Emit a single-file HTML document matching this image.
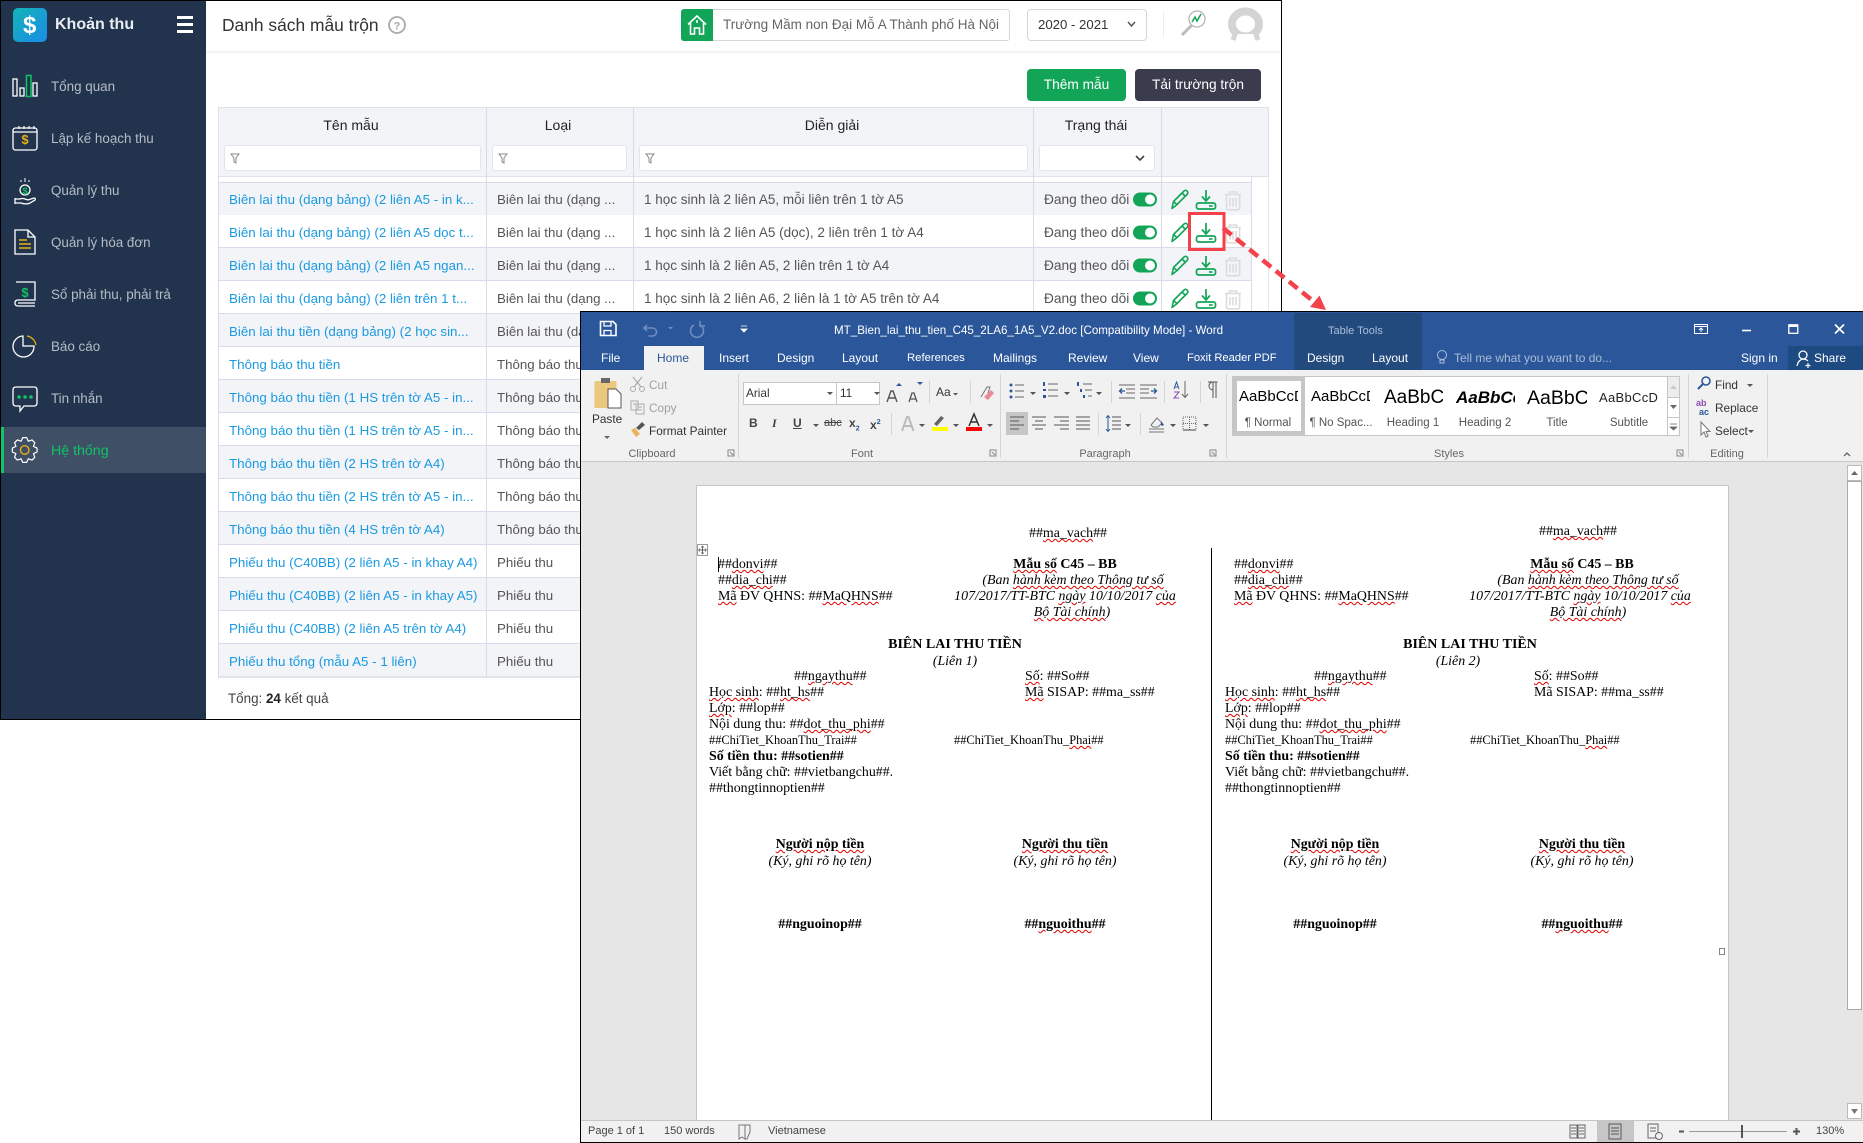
<!DOCTYPE html>
<html lang="vi"><head><meta charset="utf-8"><title>Danh sách mẫu trộn</title>
<style>
html,body{margin:0;padding:0;background:#fff}
#p{position:relative;width:1863px;height:1143px;overflow:hidden;background:#fff;font-family:"Liberation Sans",sans-serif}
.a{position:absolute;white-space:nowrap;line-height:16px;height:16px;margin-top:1px}
.c{transform:translateX(-50%)}
.b{position:absolute;box-sizing:border-box}
svg.l{position:absolute;left:0;top:0}
.m{font-size:13.4px;color:#b4bcc6;left:51px}
.h{font-size:14px;color:#222;font-weight:400}
.lk{font-size:13.35px;color:#1b9ae0;left:229px}
.t2{font-size:13.3px;color:#555;left:497px}
.t3{font-size:13.5px;color:#555;left:644px}
.t4{font-size:13.7px;color:#555;left:1044px}
.r{position:absolute;left:218px;width:1034px;height:33px;box-sizing:border-box;border-bottom:1px solid #d9dce8}
.g{background:#f3f4f8}
.w{background:#fff}
.f{position:absolute;top:145px;height:26px;background:#fff;border:1px solid #e3e5ec;border-radius:3px;box-sizing:border-box}
.tab{font-size:12px;color:#fff}
.rb{font-size:11.8px;color:#333}
.gl{font-size:11px;color:#666}
.sty{font-size:11.5px;color:#555}
.pv{margin-top:0}
.d{font-family:"Liberation Serif",serif;font-size:13.9px;color:#000;line-height:16px}
.dk{font-family:"Liberation Serif",serif;font-size:12.4px;color:#000;line-height:16px}
.bd{font-weight:bold}
.it{font-style:italic}
.s{text-decoration:underline wavy #e00000;text-decoration-thickness:.6px;text-underline-offset:1px}
.st{font-size:11px;color:#444}
</style></head><body><div id="p">

<!-- WEB APP -->
<div class="b" style="left:0;top:0;width:1282px;height:720px;border:1px solid #000;background:#fff"></div>
<div class="b" style="left:1px;top:1px;width:205px;height:718px;background:#22344d"></div>
<div class="b" style="left:1px;top:427px;width:205px;height:46px;background:#3f4f66"></div>
<div class="b" style="left:1px;top:427px;width:3px;height:46px;background:#10c565"></div>
<div class="b" style="left:206px;top:1px;width:1075px;height:50px;background:#fff;box-shadow:0 1px 3px rgba(0,0,0,.1)"></div>
<div class="b" style="left:13px;top:8px;width:34px;height:34px;border-radius:5px;background:linear-gradient(135deg,#12b5b5,#1b8be8)"></div>
<div class="a" style="left:23px;top:12px;font-size:24px;line-height:25px;height:25px;font-weight:bold;color:#fff">$</div>
<div class="a" style="left:55px;top:16px;font-size:16px;font-weight:bold;color:#e9edf2">Khoản thu</div>
<div class="b" style="left:177px;top:16px;width:16px;height:2.5px;background:#fff"></div>
<div class="b" style="left:177px;top:23px;width:16px;height:2.5px;background:#fff"></div>
<div class="b" style="left:177px;top:30px;width:16px;height:2.5px;background:#fff"></div>

<div class="a m" style="top:78px">Tổng quan</div>
<div class="a m" style="top:130px">Lập kế hoạch thu</div>
<div class="a m" style="top:182px">Quản lý thu</div>
<div class="a m" style="top:234px">Quản lý hóa đơn</div>
<div class="a m" style="top:286px">Sổ phải thu, phải trả</div>
<div class="a m" style="top:338px">Báo cáo</div>
<div class="a m" style="top:390px">Tin nhắn</div>
<div class="a m" style="top:442px;color:#10c565;font-size:14.2px">Hệ thống</div>

<div class="a" style="left:222px;top:16px;font-size:17.4px;color:#333">Danh sách mẫu trộn</div>

<div class="b" style="left:681px;top:9px;width:329px;height:32px;border:1px solid #d4d6da;border-radius:3px"></div>
<div class="b" style="left:681px;top:9px;width:32px;height:32px;background:#12a558;border-radius:3px 0 0 3px"></div>
<div class="a" style="left:723px;top:16px;font-size:13.5px;color:#666">Trường Mầm non Đại Mỗ A Thành phố Hà Nội</div>
<div class="b" style="left:1027px;top:9px;width:120px;height:32px;border:1px solid #d4d6da;border-radius:4px"></div>
<div class="a" style="left:1038px;top:16px;font-size:13.2px;color:#333">2020 - 2021</div>
<div class="b" style="left:1163px;top:12px;width:1px;height:26px;background:#eee"></div>

<div class="b" style="left:1027px;top:69px;width:99px;height:32px;background:#12a558;border-radius:4px"></div>
<div class="a c" style="left:1076.5px;top:76px;font-size:13.7px;color:#fff">Thêm mẫu</div>
<div class="b" style="left:1135px;top:69px;width:126px;height:32px;background:#3a3c4e;border-radius:4px"></div>
<div class="a c" style="left:1198px;top:76px;font-size:13.7px;color:#fff">Tải trường trộn</div>

<!-- table header -->
<div class="b" style="left:218px;top:107px;width:1051px;height:70px;background:#f3f4f8;border:1px solid #dfe1e8"></div>
<div class="a c h" style="left:351px;top:116px">Tên mẫu</div>
<div class="a c h" style="left:558px;top:116px">Loại</div>
<div class="a c h" style="left:832px;top:116px">Diễn giải</div>
<div class="a c h" style="left:1096px;top:116px">Trạng thái</div>
<div class="f" style="left:224px;width:257px"></div>
<div class="f" style="left:492px;width:135px"></div>
<div class="f" style="left:639px;width:389px"></div>
<div class="f" style="left:1039px;width:116px"></div>

<!-- rows -->
<div class="r g" style="top:182px;border-top:1px solid #d9dce8;height:34px"></div>
<div class="r w" style="top:215px"></div>
<div class="r g" style="top:248px"></div>
<div class="r w" style="top:281px"></div>
<div class="r g" style="top:314px"></div>
<div class="r w" style="top:347px"></div>
<div class="r g" style="top:380px"></div>
<div class="r w" style="top:413px"></div>
<div class="r g" style="top:446px"></div>
<div class="r w" style="top:479px"></div>
<div class="r g" style="top:512px"></div>
<div class="r w" style="top:545px"></div>
<div class="r g" style="top:578px"></div>
<div class="r w" style="top:611px"></div>
<div class="r g" style="top:644px;border-bottom:2px solid #e2e4ea;height:34px"></div>
<div class="b" style="left:218px;top:176px;width:1px;height:502px;background:#d9dce8"></div>
<div class="b" style="left:486px;top:107px;width:1px;height:571px;background:#d9dce8"></div>
<div class="b" style="left:633px;top:107px;width:1px;height:571px;background:#d9dce8"></div>
<div class="b" style="left:1033px;top:107px;width:1px;height:571px;background:#d9dce8"></div>
<div class="b" style="left:1161px;top:107px;width:1px;height:571px;background:#d9dce8"></div>
<div class="b" style="left:1251px;top:176px;width:1px;height:502px;background:#d9dce8"></div>
<div class="b" style="left:1268px;top:176px;width:1px;height:502px;background:#e4e6ec"></div>

<div class="a lk" style="top:191px">Biên lai thu (dạng bảng) (2 liên A5 - in k...</div>
<div class="a lk" style="top:224px">Biên lai thu (dạng bảng) (2 liên A5 dọc t...</div>
<div class="a lk" style="top:257px">Biên lai thu (dạng bảng) (2 liên A5 ngan...</div>
<div class="a lk" style="top:290px">Biên lai thu (dạng bảng) (2 liên trên 1 t...</div>
<div class="a lk" style="top:323px">Biên lai thu tiền (dạng bảng) (2 học sin...</div>
<div class="a lk" style="top:356px">Thông báo thu tiền</div>
<div class="a lk" style="top:389px">Thông báo thu tiền (1 HS trên tờ A5 - in...</div>
<div class="a lk" style="top:422px">Thông báo thu tiền (1 HS trên tờ A5 - in...</div>
<div class="a lk" style="top:455px">Thông báo thu tiền (2 HS trên tờ A4)</div>
<div class="a lk" style="top:488px">Thông báo thu tiền (2 HS trên tờ A5 - in...</div>
<div class="a lk" style="top:521px">Thông báo thu tiền (4 HS trên tờ A4)</div>
<div class="a lk" style="top:554px">Phiếu thu (C40BB) (2 liên A5 - in khay A4)</div>
<div class="a lk" style="top:587px">Phiếu thu (C40BB) (2 liên A5 - in khay A5)</div>
<div class="a lk" style="top:620px">Phiếu thu (C40BB) (2 liên A5 trên tờ A4)</div>
<div class="a lk" style="top:653px">Phiếu thu tổng (mẫu A5 - 1 liên)</div>

<div class="a t2" style="top:191px">Biên lai thu (dạng ...</div>
<div class="a t2" style="top:224px">Biên lai thu (dạng ...</div>
<div class="a t2" style="top:257px">Biên lai thu (dạng ...</div>
<div class="a t2" style="top:290px">Biên lai thu (dạng ...</div>
<div class="a t2" style="top:323px">Biên lai thu (dạng ...</div>
<div class="a t2" style="top:356px">Thông báo thu tiền</div>
<div class="a t2" style="top:389px">Thông báo thu tiền</div>
<div class="a t2" style="top:422px">Thông báo thu tiền</div>
<div class="a t2" style="top:455px">Thông báo thu tiền</div>
<div class="a t2" style="top:488px">Thông báo thu tiền</div>
<div class="a t2" style="top:521px">Thông báo thu tiền</div>
<div class="a t2" style="top:554px">Phiếu thu</div>
<div class="a t2" style="top:587px">Phiếu thu</div>
<div class="a t2" style="top:620px">Phiếu thu</div>
<div class="a t2" style="top:653px">Phiếu thu</div>

<div class="a t3" style="top:191px">1 học sinh là 2 liên A5, mỗi liên trên 1 tờ A5</div>
<div class="a t3" style="top:224px">1 học sinh là 2 liên A5 (dọc), 2 liên trên 1 tờ A4</div>
<div class="a t3" style="top:257px">1 học sinh là 2 liên A5, 2 liên trên 1 tờ A4</div>
<div class="a t3" style="top:290px">1 học sinh là 2 liên A6, 2 liên là 1 tờ A5 trên tờ A4</div>
<div class="a t4" style="top:191px">Đang theo dõi</div>
<div class="a t4" style="top:224px">Đang theo dõi</div>
<div class="a t4" style="top:257px">Đang theo dõi</div>
<div class="a t4" style="top:290px">Đang theo dõi</div>

<div class="a" style="left:228px;top:690px;font-size:13.4px;color:#444">Tổng: <b style="color:#222">24</b> kết quả</div>

<svg class="l" width="1863" height="1143" viewBox="0 0 1863 1143" fill="none">
<defs>
<g id="pen" fill="none" stroke="#12a558" stroke-width="1.6" stroke-linejoin="round"><path d="M1172 208.500l1.500-7 10.500-10.500q2-1.500 3.300.2 1.200 1.800-.3 3.300l-10.500 10.500z"/><path d="M1173.500 201.500l4 3.500M1182 193l3.500 3.500"/></g>
<g id="dl" fill="none" stroke="#12a558" stroke-width="1.700"><path d="M1206 190v10M1202 196.500l4 4.500 4-4.500"/><rect x="1196.500" y="203" width="19" height="6" rx="2"/><path d="M1209 206h3.500"/></g>
<g id="tr" fill="none" stroke="#dcdcdc" stroke-width="1.600"><path d="M1225 194.500h16M1229.500 194.500v-2.500h7v2.500"/><path d="M1226.500 194.500v13.500q0 1.800 1.800 1.800h9.500q1.800 0 1.800-1.800v-13.500"/><path d="M1230 198v8.500M1233 198v8.500M1236 198v8.500"/></g>
<g id="tg"><rect x="1133" y="192.500" width="24" height="14" rx="7" fill="#12a558"/><circle cx="1150" cy="199.500" r="5" fill="#fff"/></g>
<path id="fl" d="M0 0h8l-3 4v5l-2-1V4z" stroke="#888" stroke-width="1"/>
</defs>
<use href="#pen"/><use href="#dl"/><use href="#tr"/><use href="#tg"/>
<use href="#pen" y="33"/><use href="#dl" y="33"/><use href="#tr" y="33"/><use href="#tg" y="33"/>
<use href="#pen" y="66"/><use href="#dl" y="66"/><use href="#tr" y="66"/><use href="#tg" y="66"/>
<use href="#pen" y="99"/><use href="#dl" y="99"/><use href="#tr" y="99"/><use href="#tg" y="99"/>
<use href="#fl" x="231" y="154"/><use href="#fl" x="499" y="154"/><use href="#fl" x="646" y="154"/>
<path d="M1136 156l4 4 4-4" stroke="#444" stroke-width="1.600"/>
<path d="M1128 22l3.500 4 3.500-4" stroke="#555" stroke-width="1.500"/>
<!-- help -->
<circle cx="397" cy="25" r="8" stroke="#aaa" stroke-width="1.800"/>
<text x="397" y="29.500" font-family="Liberation Sans" font-size="11" font-weight="bold" fill="#aaa" text-anchor="middle">?</text>
<!-- home -->
<path d="M688 24.500l9-8.500 9 8.500M690.500 23v11h4v-6h5v6h4V23M697 20v3" stroke="#fff" stroke-width="1.600"/>
<!-- magnifier -->
<circle cx="1197" cy="19" r="8" stroke="#b5b5b5" stroke-width="1.300"/>
<path d="M1192 25l-10 10" stroke="#bbb" stroke-width="3"/>
<path d="M1192 22l3-5 2 4 4-7" stroke="#12a558" stroke-width="1.500"/>
<!-- avatar -->
<ellipse cx="1245.500" cy="24" rx="13.500" ry="12.500" stroke="#d4d4d4" stroke-width="8"/>
<path d="M1230 41q4-6 8-7h15q4 1 8 7" fill="#fff"/>
<path d="M1236 32l-3 8M1255 32l3 8" stroke="#d4d4d4" stroke-width="5"/>
<!-- sidebar icons -->
<g stroke="#fff" stroke-width="1.300">
<rect x="13" y="79" width="4" height="17"/><rect x="20" y="88" width="4" height="8"/><rect x="26.500" y="75.500" width="4.500" height="21" stroke="#10c565" stroke-width="1.500"/><rect x="33" y="83" width="4" height="13"/>
<rect x="13" y="128" width="24" height="22" rx="2.500"/><path d="M13 132h24"/><path d="M19 126v3M24 126v3M29 126v3M34 126v3" stroke-width="1.200"/>
<path d="M15 199h5q2-1 5 0l3 1 6-2q2 0 1 2l-6 3.500q-4 1-8-.5h-6zM15 198v6"/><circle cx="25" cy="190" r="5"/><path d="M25 178v4M21 180v2M29 180v2" stroke-width="1"/>
<path d="M15 230h13l7 7v17H15zM28 230v7h7"/>
<path d="M16 282h19v18H18q-3 0-3 3t3 3h17M18 303h17"/>
<path d="M34 346a10.500 10.500 0 1 1-11-10v10z"/>
<path d="M16 387h18q3 0 3 3v13q0 3-3 3H24l-4 5v-5h-4q-3 0-3-3v-13q0-3 3-3z"/>
<path transform="translate(24.700 450)" stroke-width="1.200" stroke-linejoin="round" d="M-1.960-12.350L1.960-12.350L3.640-8.780L7.350-10.110L10.110-7.350L8.780-3.640L12.350-1.960L12.350 1.960L8.780 3.640L10.110 7.350L7.350 10.110L3.640 8.780L1.960 12.350L-1.960 12.350L-3.640 8.780L-7.350 10.110L-10.110 7.350L-8.780 3.640L-12.350 1.960L-12.350-1.960L-8.780-3.640L-10.110-7.350L-7.350-10.110L-3.640-8.780Z"/>
</g>
<path d="M27 336a11 11 0 0 1 9 9" stroke="#e5b016" stroke-width="1.300"/>
<path d="M19 240h8M19 244h12M19 248h12" stroke="#e5b016" stroke-width="1.500"/>
<circle cx="24.700" cy="450" r="4.300" stroke="#e5b016" stroke-width="1.400"/>
<g fill="#10c565"><circle cx="19" cy="397" r="1.800"/><circle cx="25" cy="397" r="1.800"/><circle cx="31" cy="397" r="1.800"/></g>
<text x="25" y="144" font-family="Liberation Sans" font-size="13" font-weight="bold" fill="#e5b016" text-anchor="middle">$</text>
<text x="25" y="194" font-family="Liberation Sans" font-size="9.500" font-weight="bold" fill="#10c565" text-anchor="middle">$</text>
<text x="25" y="297" font-family="Liberation Sans" font-size="13" font-weight="bold" fill="#10c565" text-anchor="middle">$</text>
<!-- red box + arrow -->
<rect x="1189.500" y="213.500" width="34.500" height="36" stroke="#f4424a" stroke-width="3"/>
<path d="M1223 228L1313 301" stroke="#f4424a" stroke-width="4.500" stroke-dasharray="11 6"/>
<path d="M1310 307l9.500-11.500 6.500 14.500z" fill="#f4424a"/>
</svg>

<!-- WORD WINDOW -->
<div class="b" style="left:580px;top:311px;width:1283px;height:832px;background:#e6e6e6;border-left:1px solid #000;border-top:1px solid #000;border-bottom:1px solid #000"></div>
<div class="b" style="left:581px;top:312px;width:1282px;height:58px;background:#2b579a"></div>
<div class="b" style="left:1294px;top:313px;width:128px;height:57px;background:#234a7d"></div>
<div class="b" style="left:644px;top:346px;width:60px;height:24px;background:#f1f1f1"></div>
<div class="b" style="left:1788px;top:346px;width:75px;height:24px;background:#1d4a80"></div>
<div class="b" style="left:581px;top:370px;width:1282px;height:92px;background:#f1f1f1;border-bottom:1px solid #c6c6c6"></div>

<div class="a" style="left:834px;top:322px;font-size:11.6px;color:#fff">MT_Bien_lai_thu_tien_C45_2LA6_1A5_V2.doc [Compatibility Mode] - Word</div>
<div class="a tab" style="left:601px;top:349px">File</div>
<div class="a tab" style="left:657px;top:349px;color:#2b579a">Home</div>
<div class="a tab" style="left:719px;top:349px">Insert</div>
<div class="a tab" style="left:777px;top:349px">Design</div>
<div class="a tab" style="left:842px;top:349px">Layout</div>
<div class="a tab" style="left:907px;top:349px;font-size:11.3px">References</div>
<div class="a tab" style="left:993px;top:349px">Mailings</div>
<div class="a tab" style="left:1068px;top:349px">Review</div>
<div class="a tab" style="left:1133px;top:349px">View</div>
<div class="a tab" style="left:1187px;top:349px;font-size:11.2px">Foxit Reader PDF</div>
<div class="a tab" style="left:1328px;top:322px;font-size:11px;color:#a9bcd8">Table Tools</div>
<div class="a tab" style="left:1307px;top:349px">Design</div>
<div class="a tab" style="left:1372px;top:349px">Layout</div>
<div class="a tab" style="left:1454px;top:349px;color:#a9bbd6">Tell me what you want to do...</div>
<div class="a tab" style="left:1741px;top:349px">Sign in</div>
<div class="a tab" style="left:1814px;top:349px">Share</div>

<div class="a rb" style="left:592px;top:410px">Paste</div>
<div class="a rb" style="left:649px;top:376px;color:#a0a0a0">Cut</div>
<div class="a rb" style="left:649px;top:399px;color:#a0a0a0">Copy</div>
<div class="a rb" style="left:649px;top:422px">Format Painter</div>
<div class="a c gl" style="left:652px;top:445px">Clipboard</div>
<div class="a c gl" style="left:862px;top:445px">Font</div>
<div class="a c gl" style="left:1105px;top:445px">Paragraph</div>
<div class="a c gl" style="left:1449px;top:445px">Styles</div>
<div class="a c gl" style="left:1727px;top:445px">Editing</div>

<div class="b" style="left:743px;top:382px;width:94px;height:23px;background:#fff;border:1px solid #c6c6c6"></div>
<div class="b" style="left:836px;top:382px;width:44px;height:23px;background:#fff;border:1px solid #c6c6c6"></div>
<div class="a rb" style="left:746px;top:384px">Arial</div>
<div class="a rb" style="left:840px;top:384px">11</div>
<div class="a rb" style="left:936px;top:383px;font-size:12px">Aa</div>
<div class="a" style="left:749px;top:414px;font-size:12px;font-weight:bold;color:#444">B</div>
<div class="a" style="left:772px;top:414px;font-size:12px;font-style:italic;font-family:'Liberation Serif',serif;font-weight:bold;color:#444">I</div>
<div class="a" style="left:793px;top:414px;font-size:12px;font-weight:bold;color:#444;text-decoration:underline">U</div>
<div class="a" style="left:824px;top:414px;font-size:11px;color:#444;text-decoration:line-through">abc</div>
<div class="a" style="left:849px;top:414px;font-size:12px;font-weight:bold;color:#444">x<sub style="font-size:7px;color:#2b579a">2</sub></div>
<div class="a" style="left:870px;top:414px;font-size:12px;font-weight:bold;color:#444">x<sup style="font-size:7px;color:#2b579a">2</sup></div>

<div class="b" style="left:1006px;top:412px;width:22px;height:23px;background:#c6c6c6"></div>

<!-- styles gallery -->
<div class="b" style="left:1232px;top:376px;width:448px;height:60px;background:#fff;border:1px solid #c6c6c6"></div>
<div class="b" style="left:1233px;top:377px;width:72px;height:58px;border:4px solid #c6c6c6"></div>
<div class="a pv" style="left:1239px;top:389px;width:59px;overflow:hidden;font-size:15px;color:#000">AaBbCcD</div>
<div class="a pv" style="left:1311px;top:389px;width:59px;overflow:hidden;font-size:15px;color:#000">AaBbCcD</div>
<div class="a pv" style="left:1384px;top:388px;width:59px;overflow:hidden;font-size:19px;line-height:20px;height:21px;color:#000">AaBbC</div>
<div class="a pv" style="left:1456px;top:388px;width:59px;overflow:hidden;font-size:17px;line-height:20px;height:21px;color:#000;font-weight:bold;font-style:italic">AaBbCc</div>
<div class="a pv" style="left:1527px;top:388px;width:60px;overflow:hidden;font-size:19.5px;line-height:20px;height:21px;color:#000">AaBbC</div>
<div class="a pv" style="left:1599px;top:390px;width:59px;overflow:hidden;font-size:13px;color:#222;letter-spacing:.3px">AaBbCcD</div>
<div class="a c sty" style="left:1268px;top:414px">¶ Normal</div>
<div class="a c sty" style="left:1341px;top:414px">¶ No Spac...</div>
<div class="a c sty" style="left:1413px;top:414px">Heading 1</div>
<div class="a c sty" style="left:1485px;top:414px">Heading 2</div>
<div class="a c sty" style="left:1557px;top:414px">Title</div>
<div class="a c sty" style="left:1629px;top:414px">Subtitle</div>
<div class="b" style="left:1667px;top:376px;width:13px;height:60px;background:#fff;border:1px solid #c6c6c6"></div>
<div class="b" style="left:1667px;top:376px;width:13px;height:22px;background:#ededed;border:1px solid #c6c6c6"></div>
<div class="b" style="left:1667px;top:417px;width:13px;height:1px;background:#c6c6c6"></div>

<div class="a rb" style="left:1715px;top:376px">Find</div>
<div class="a rb" style="left:1715px;top:399px">Replace</div>
<div class="a rb" style="left:1715px;top:422px">Select</div>

<!-- page -->
<div class="b" style="left:696px;top:485px;width:1033px;height:635px;background:#fff;border:1px solid #c6c6c6;border-bottom:0"></div>
<div class="b" style="left:1211px;top:548px;width:1px;height:572px;background:#000"></div>
<div class="b" style="left:718px;top:557px;width:1px;height:15px;background:#000"></div>
<div class="b" style="left:697px;top:544px;width:11px;height:12px;background:#fff;border:1px solid #999"></div>
<div class="b" style="left:1719px;top:948px;width:6px;height:7px;background:#fff;border:1px solid #888"></div>

<!-- doc left -->
<div class="a c d" style="left:1068px;top:525px">##<span class="s">ma_vach</span>##</div>
<div class="a d" style="left:718px;top:556px">##<span class="s">donvi</span>##</div>
<div class="a d" style="left:718px;top:572px">##<span class="s">dia_chi</span>##</div>
<div class="a d" style="left:718px;top:588px"><span class="s">Mã</span> ĐV QHNS: ##<span class="s">MaQHNS</span>##</div>
<div class="a c d bd" style="left:1065px;top:556px"><span class="s">Mẫu số</span> C45 – BB</div>
<div class="a c d it" style="left:1073px;top:572px">(Ban <span class="s">hành kèm theo Thông tư số</span></div>
<div class="a c d it" style="left:1065px;top:588px">107/2017/TT-BTC <span class="s">ngày</span> 10/10/2017 <span class="s">của</span></div>
<div class="a c d it" style="left:1072px;top:604px"><span class="s">Bộ Tài chính</span>)</div>
<div class="a c d bd" style="left:955px;top:636px;font-size:14px">BIÊN LAI THU TIỀN</div>
<div class="a c d it" style="left:955px;top:653px">(Liên 1)</div>
<div class="a d" style="left:794px;top:668px">##<span class="s">ngaythu</span>##</div>
<div class="a d" style="left:1025px;top:668px"><span class="s">Số</span>: ##So##</div>
<div class="a d" style="left:709px;top:684px"><span class="s">Học sinh</span>: ##<span class="s">ht_hs</span>##</div>
<div class="a d" style="left:1025px;top:684px"><span class="s">Mã</span> SISAP: ##ma_ss##</div>
<div class="a d" style="left:709px;top:700px"><span class="s">Lớp</span>: ##lop##</div>
<div class="a d" style="left:709px;top:716px">Nội dung thu: ##<span class="s">dot_thu_phi</span>##</div>
<div class="a dk" style="left:709px;top:731px">##ChiTiet_KhoanThu_Trai##</div>
<div class="a dk" style="left:954px;top:731px">##ChiTiet_KhoanThu_<span class="s">Phai</span>##</div>
<div class="a d bd" style="left:709px;top:748px">Số tiền thu: ##sotien##</div>
<div class="a d" style="left:709px;top:764px">Viết bằng chữ: ##vietbangchu##.</div>
<div class="a d" style="left:709px;top:780px">##thongtinnoptien##</div>
<div class="a c d bd" style="left:820px;top:836px"><span class="s">Người nộp tiền</span></div>
<div class="a c d bd" style="left:1065px;top:836px"><span class="s">Người thu tiền</span></div>
<div class="a c d it" style="left:820px;top:853px">(Ký, ghi rõ họ tên)</div>
<div class="a c d it" style="left:1065px;top:853px">(Ký, ghi rõ họ tên)</div>
<div class="a c d bd" style="left:820px;top:916px">##nguoinop##</div>
<div class="a c d bd" style="left:1065px;top:916px">##<span class="s">nguoithu</span>##</div>

<!-- doc right -->
<div class="a c d" style="left:1578px;top:523px">##<span class="s">ma_vach</span>##</div>
<div class="a d" style="left:1234px;top:556px">##<span class="s">donvi</span>##</div>
<div class="a d" style="left:1234px;top:572px">##<span class="s">dia_chi</span>##</div>
<div class="a d" style="left:1234px;top:588px"><span class="s">Mã</span> ĐV QHNS: ##<span class="s">MaQHNS</span>##</div>
<div class="a c d bd" style="left:1582px;top:556px"><span class="s">Mẫu số</span> C45 – BB</div>
<div class="a c d it" style="left:1588px;top:572px">(Ban <span class="s">hành kèm theo Thông tư số</span></div>
<div class="a c d it" style="left:1580px;top:588px">107/2017/TT-BTC <span class="s">ngày</span> 10/10/2017 <span class="s">của</span></div>
<div class="a c d it" style="left:1588px;top:604px"><span class="s">Bộ Tài chính</span>)</div>
<div class="a c d bd" style="left:1470px;top:636px;font-size:14px">BIÊN LAI THU TIỀN</div>
<div class="a c d it" style="left:1458px;top:653px">(Liên 2)</div>
<div class="a d" style="left:1314px;top:668px">##<span class="s">ngaythu</span>##</div>
<div class="a d" style="left:1534px;top:668px"><span class="s">Số</span>: ##So##</div>
<div class="a d" style="left:1225px;top:684px"><span class="s">Học sinh</span>: ##<span class="s">ht_hs</span>##</div>
<div class="a d" style="left:1534px;top:684px">Mã SISAP: ##ma_ss##</div>
<div class="a d" style="left:1225px;top:700px"><span class="s">Lớp</span>: ##lop##</div>
<div class="a d" style="left:1225px;top:716px">Nội dung thu: ##<span class="s">dot_thu_phi</span>##</div>
<div class="a dk" style="left:1225px;top:731px">##ChiTiet_KhoanThu_Trai##</div>
<div class="a dk" style="left:1470px;top:731px">##ChiTiet_KhoanThu_<span class="s">Phai</span>##</div>
<div class="a d bd" style="left:1225px;top:748px">Số tiền thu: ##sotien##</div>
<div class="a d" style="left:1225px;top:764px">Viết bằng chữ: ##vietbangchu##.</div>
<div class="a d" style="left:1225px;top:780px">##thongtinnoptien##</div>
<div class="a c d bd" style="left:1335px;top:836px"><span class="s">Người nộp tiền</span></div>
<div class="a c d bd" style="left:1582px;top:836px"><span class="s">Người thu tiền</span></div>
<div class="a c d it" style="left:1335px;top:853px">(Ký, ghi rõ họ tên)</div>
<div class="a c d it" style="left:1582px;top:853px">(Ký, ghi rõ họ tên)</div>
<div class="a c d bd" style="left:1335px;top:916px">##nguoinop##</div>
<div class="a c d bd" style="left:1582px;top:916px">##<span class="s">nguoithu</span>##</div>

<!-- scrollbar -->
<div class="b" style="left:1846px;top:463px;width:17px;height:657px;background:#e6e6e6"></div>
<div class="b" style="left:1847px;top:465px;width:15px;height:16px;background:#fff;border:1px solid #bbb"></div>
<div class="b" style="left:1847px;top:481px;width:15px;height:529px;background:#fff;border:1px solid #aaa"></div>
<div class="b" style="left:1847px;top:1103px;width:15px;height:16px;background:#fff;border:1px solid #bbb"></div>

<!-- status bar -->
<div class="b" style="left:581px;top:1120px;width:1282px;height:22px;background:#f1f1f1;border-top:1px solid #c6c6c6"></div>
<div class="b" style="left:1597px;top:1120px;width:37px;height:22px;background:#c6c6c6"></div>
<div class="a st" style="left:588px;top:1122px">Page 1 of 1</div>
<div class="a st" style="left:664px;top:1122px">150 words</div>
<div class="a st" style="left:768px;top:1122px">Vietnamese</div>
<div class="a st" style="left:1816px;top:1122px">130%</div>

<svg class="l" width="1863" height="1143" viewBox="0 0 1863 1143" fill="none" style="z-index:3">
<!-- QAT -->
<path d="M600.500 321.500h12.500l3 3v11h-15.500z" stroke="#fff" stroke-width="1.600"/><path d="M604 322v4h7v-4M604 335v-4.500h7v4.500" stroke="#fff" stroke-width="1.300"/>
<path d="M647 325l-3 3 3 3M644.500 328h8a4 4 0 0 1 0 8h-4" stroke="#6f8ebd" stroke-width="1.600"/>
<path d="M668 327h5l-2.500 2.500z" fill="#6f8ebd"/>
<path d="M694 325a6.500 6.500 0 1 0 6 0M700 321v5h5" stroke="#6f8ebd" stroke-width="1.600"/>
<path d="M741 326h6M741 329h6l-3 3z" fill="#fff" stroke="#fff" stroke-width=".8"/>
<!-- ctrl -->
<path d="M1694.500 324.500h13v9h-13zM1694.500 326.500h13M1701 332v-4M1699 330l2-2 2 2" stroke="#fff" stroke-width="1"/>
<path d="M1742 330.500h9" stroke="#fff" stroke-width="1.600"/>
<rect x="1788.800" y="324.800" width="9" height="8.500" stroke="#fff" stroke-width="1.300"/><path d="M1788.800 326h9" stroke="#fff" stroke-width="2"/>
<path d="M1835 324.500l9 9M1844 324.500l-9 9" stroke="#fff" stroke-width="1.700"/>
<circle cx="1442" cy="355" r="4.500" stroke="#a9bbd6"/><path d="M1440 360h4v3h-4z" stroke="#a9bbd6"/>
<circle cx="1803" cy="355" r="4" stroke="#fff" stroke-width="1.300"/><path d="M1797 366q1-6 6-7 3 0 5 2M1808 363v5M1805.500 365.500h5" stroke="#fff" stroke-width="1.200"/>
<!-- clipboard -->
<rect x="594.500" y="381" width="22" height="27" rx="1" fill="#eac87e"/><rect x="601" y="378" width="9" height="5" fill="#666"/>
<path d="M608 389h8l5 5v14h-13z" fill="#fff" stroke="#555"/>
<path d="M604 436h6l-3 3z" fill="#666"/>
<path d="M633 377l8 10M642 377l-8 10" stroke="#aaa" stroke-width="1.200"/><circle cx="633" cy="389" r="2.500" stroke="#aaa"/><circle cx="642" cy="389" r="2.500" stroke="#aaa"/>
<path d="M631 401h7v9h-7zM636 404h8v10h-8zM633 404h3M638 407h4M638 410h4" stroke="#aaa" fill="#f1f1f1"/>
<path d="M631 430l5 7 4-3-5-6z" fill="#e8b25e"/><path d="M636 428l6-6 3 3-6 5z" fill="#555"/>
<!-- launchers -->
<g stroke="#888"><path d="M728 450h6v6h-6zM730 452l3 3"/><path d="M990 450h6v6h-6zM992 452l3 3"/><path d="M1210 450h6v6h-6zM1212 452l3 3"/><path d="M1677 450h6v6h-6zM1679 452l3 3"/></g>
<!-- separators -->
<g stroke="#d4d4d4"><path d="M738.500 374v84M1000.500 374v84M1226.500 374v84M1688.500 374v84M1767.500 374v84M929.500 381v22M970.500 381v22M1111.500 381v22M1164.500 381v22M1200.500 381v22M891.500 413v22M1098.500 413v22M1140.500 413v22"/></g>
<!-- font -->
<g fill="#555"><path d="M827 392h6l-3 3zM874 392h6l-3 3zM953 393h5l-2.500 2.500zM813 424h6l-3 3zM919 424h6l-3 3zM953 424h6l-3 3zM987 424h6l-3 3zM1030 392h6l-3 3zM1064 392h6l-3 3zM1096 392h6l-3 3zM1125 424h6l-3 3zM1170 424h6l-3 3zM1203 424h6l-3 3zM1747 384h6l-3 3zM1748 430h6l-3 3z"/></g>
<path d="M887 402l4-11h2l4 11M889 398h6" stroke="#555" stroke-width="1.400"/><path d="M896 386h6l-3-3z" fill="#2b579a"/>
<path d="M909 402l3-9h2l3 9M910.500 399h5" stroke="#555" stroke-width="1.300"/><path d="M917 382h6l-3 3z" fill="#2b579a"/>
<path d="M981 397l6-10h3l-2 6" stroke="#777"/><path d="M984 397l7-7 3 3-6 7z" fill="#e88a96"/>
<path d="M902 431l5-14h1.500l5 14M904 426h8" stroke="#bbb" stroke-width="2"/>
<path d="M934 424l7-8 3 2-7 8z" fill="#666"/><rect x="932" y="427" width="16" height="4" fill="#ff0"/>
<path d="M969 426l5-12 5 12M971 422h6" stroke="#333" stroke-width="1.500"/><rect x="966" y="427" width="16" height="4" fill="#f00"/>
<!-- para row 1 -->
<g stroke="#666"><path d="M1015 385h9M1015 391h9M1015 397h9M1048 384h10M1048 390h10M1048 396h10M1083 384h9M1085 390h7M1088 396h4"/>
<path d="M1119 385h16M1126 389h9M1126 393h9M1119 398h16M1140 385h17M1140 389h9M1140 393h9M1140 398h17"/></g>
<g fill="#2b579a"><circle cx="1011" cy="385" r="1.500"/><circle cx="1011" cy="391" r="1.500"/><circle cx="1011" cy="397" r="1.500"/><path d="M1043 382h2v4h-2zM1043 389h3v2h-3zM1043 395h3v3h-3zM1077 382h2v4h-2zM1080 389h2v3h-2zM1083 395h2v3h-2z"/></g>
<path d="M1125 391h-5m2-2.500l-2.500 2.500 2.500 2.500M1151 391h5m-2-2.500l2.500 2.500-2.500 2.500" stroke="#2b579a" stroke-width="1.300"/>
<path d="M1185 381v16M1182 394l3 3.500 3-3.500" stroke="#666"/>
<path d="M1174 389l2.500-7 2.500 7M1175 387h3" stroke="#2b579a"/><path d="M1174 392h5l-5 6h5" stroke="#8a4bb0"/>
<path d="M1213 382v16M1216 382v16M1208 382h9.500M1213 382a4 4 0 0 0 0 8" stroke="#555"/>
<!-- align -->
<g stroke="#555"><path d="M1010 417h14M1010 421h9M1010 425h14M1010 429h9M1032 417h14M1035 421h8M1032 425h14M1035 429h8M1054 417h15M1060 421h9M1054 425h15M1060 429h9M1076 417h14M1076 421h14M1076 425h14M1076 429h14M1112 417h9M1112 421h9M1112 425h9M1112 429h9"/></g>
<path d="M1108 416v15M1106 418l2-2.500 2 2.500M1106 429l2 2.500 2-2.500" stroke="#2b579a"/>
<path d="M1149 432h15M1149 429h15M1151 425l6-7 5 5-4 4h-5z" stroke="#777"/><path d="M1161 421l3 4q-3 2-3-1z" fill="#2b579a"/>
<path d="M1183 417h13v13h-13zM1183 423.500h13M1189.500 417v13" stroke="#666" stroke-dasharray="1 1"/><path d="M1183 430h13" stroke="#444"/>
<!-- styles scroll -->
<path d="M1670 389l3.500-4 3.500 4z" fill="#ccc"/><path d="M1670 405l3.500 4 3.500-4z" fill="#666"/><path d="M1670 424h7M1670 427h7l-3.500 3z" stroke="#666" fill="#666" stroke-width=".7"/>
<!-- editing -->
<circle cx="1706" cy="381" r="4" stroke="#2b579a" stroke-width="1.600"/><path d="M1703 384l-5 5" stroke="#2b579a" stroke-width="2"/>
<text x="1696" y="406" font-family="Liberation Sans" font-size="9" font-weight="bold" fill="#8a4bb0">ab</text>
<text x="1699" y="415" font-family="Liberation Sans" font-size="9" font-weight="bold" fill="#2b579a">ac</text>
<path d="M1701 422l0 13 3-3 2 5 2-1-2-4.500h4z" stroke="#777" fill="#fff"/>
<path d="M1844 456l3-3 3 3" stroke="#666" stroke-width="1.300"/>
<!-- move handle -->
<path d="M702.500 546v8M698.500 550h8" stroke="#666"/><path d="M701 547.500l1.500-1.500 1.500 1.500M701 552.500l1.500 1.500 1.500-1.500M700 548.500l-1.500 1.500 1.500 1.500M705 548.500l1.500 1.500-1.500 1.500" stroke="#666" stroke-width=".7"/>
<!-- scrollbar arrows -->
<path d="M1851 475l3.500-4 3.500 4z" fill="#666"/><path d="M1851 1109l3.500 5 3.500-5z" fill="#777"/>
<!-- status icons -->
<path d="M739 1125h6v14l-3-2-3 2zM745 1125h5v7l-3 7h-2" stroke="#777"/>
<path d="M1570 1125h7v13h-7zM1578 1125h7v13h-7zM1571 1128h5M1571 1131h5M1571 1134h5M1579 1128h5M1579 1131h5M1579 1134h5" stroke="#666"/>
<path d="M1609 1124h12v15h-12zM1611 1128h8M1611 1131h8M1611 1134h8" stroke="#555"/>
<path d="M1648 1124h10v14h-10zM1650 1128h6M1650 1131h6" stroke="#666"/><circle cx="1659" cy="1136" r="3.500" stroke="#666" fill="#f1f1f1"/>
<path d="M1679 1131.500h5" stroke="#555" stroke-width="2"/>
<path d="M1689 1131.500h98" stroke="#999"/>
<path d="M1742 1125v13" stroke="#555" stroke-width="2"/>
<path d="M1793 1131.500h7M1796.500 1128v7" stroke="#555" stroke-width="2"/>
</svg>
</div></body></html>
